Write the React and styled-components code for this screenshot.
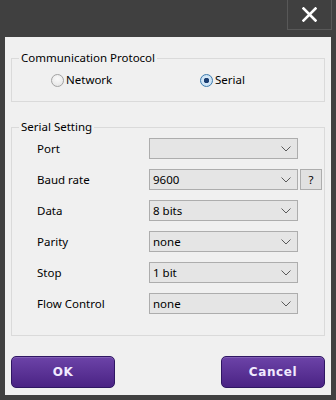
import styled, { createGlobalStyle } from "styled-components";

const GlobalStyle = createGlobalStyle`
  html, body {
    margin: 0;
    padding: 0;
    background: #404040;
  }
`;

const rows = [
  { label: "Port", value: "" },
  { label: "Baud rate", value: "9600", help: true },
  { label: "Data", value: "8 bits" },
  { label: "Parity", value: "none" },
  { label: "Stop", value: "1 bit" },
  { label: "Flow Control", value: "none" },
];

const Chevron = () => (
  <svg width="10" height="6" viewBox="0 0 10 6">
    <polyline points="0.5,0.5 5,5 9.5,0.5" fill="none" stroke="#5a5a5a" strokeWidth="1" />
  </svg>
);

const App = () => (
  <>
    <GlobalStyle />
    <Window>
      <TitleBar>
        <CloseButton>
          <svg width="15" height="15" viewBox="0 0 15 15">
            <path d="M1.5 1.5 L13.5 13.5 M13.5 1.5 L1.5 13.5" stroke="#fff" strokeWidth="2.6" strokeLinecap="square" />
          </svg>
        </CloseButton>
      </TitleBar>
      <Panel>
        <Group $top={14}>
          <Legend>Communication Protocol</Legend>
          <RadioRow>
            <RadioOption>
              <RadioMark />
              Network
            </RadioOption>
            <RadioOption>
              <RadioMark $checked />
              Serial
            </RadioOption>
          </RadioRow>
        </Group>
        <Group $top={18}>
          <Legend>Serial Setting</Legend>
          <SettingsGrid>
            {rows.map((row) => (
              <SettingRow key={row.label}>
                <FieldLabel>{row.label}</FieldLabel>
                <Select>
                  <span>{row.value}</span>
                  <Chevron />
                </Select>
                {row.help && <HelpButton>?</HelpButton>}
              </SettingRow>
            ))}
          </SettingsGrid>
        </Group>
        <ButtonBar>
          <PurpleButton>OK</PurpleButton>
          <PurpleButton>Cancel</PurpleButton>
        </ButtonBar>
      </Panel>
    </Window>
  </>
);

const Window = styled.div`
  width: 336px;
  height: 400px;
  box-sizing: border-box;
  background: #404040;
  padding: 0 5px 5px;
  display: flex;
  flex-direction: column;
  font-family: "Noto Sans", "Open Sans", sans-serif;
  font-size: 11.5px;
  color: #000;
`;

const TitleBar = styled.div`
  height: 37px;
  flex-shrink: 0;
  display: flex;
  justify-content: flex-end;
  align-items: flex-start;
`;

const CloseButton = styled.div`
  width: 45px;
  height: 30px;
  box-sizing: border-box;
  border: 1px solid #585858;
  border-top: none;
  display: flex;
  align-items: center;
  justify-content: center;
  margin-right: -1px;
`;

const Panel = styled.div`
  flex: 1;
  background: #f0f0f0;
  display: flex;
  flex-direction: column;
  padding: 0 6px 7px;
`;

const Group = styled.fieldset`
  margin: ${(p) => p.$top}px 0 0;
  padding: 0;
  border: 1px solid #dadada;
  min-width: 0;
`;

const Legend = styled.legend`
  margin-left: 7px;
  padding: 0 2px;
  line-height: 14px;
`;

const RadioRow = styled.div`
  display: grid;
  grid-template-columns: 149px auto;
  padding: 8px 0 14px 39px;
  line-height: 14px;
`;

const RadioOption = styled.label`
  display: flex;
  align-items: center;
  gap: 2px;
`;

const RadioMark = styled.span`
  width: 13px;
  height: 13px;
  box-sizing: border-box;
  border-radius: 50%;
  border: 1px solid ${(p) => (p.$checked ? "#3d7bad" : "#a2a2a2")};
  background: ${(p) =>
    p.$checked
      ? "radial-gradient(circle, #1c3f73 0 2.5px, #d7e9f8 3px, #b9d6ee 100%)"
      : "radial-gradient(circle at 50% 35%, #fafafa 0, #e2e2e2 100%)"};
`;

const SettingsGrid = styled.div`
  display: flex;
  flex-direction: column;
  gap: 10px;
  padding: 4px 0 21px 25px;
`;

const SettingRow = styled.div`
  display: flex;
  align-items: center;
  height: 21px;
`;

const FieldLabel = styled.span`
  width: 112px;
`;

const Select = styled.div`
  width: 149px;
  height: 21px;
  box-sizing: border-box;
  border: 1px solid #adadad;
  background: #e5e5e5;
  display: flex;
  align-items: center;
  justify-content: space-between;
  padding: 0 6px 0 3px;
`;

const HelpButton = styled.div`
  width: 22px;
  height: 21px;
  box-sizing: border-box;
  margin-left: 2px;
  border: 1px solid #adadad;
  background: #e1e1e1;
  display: flex;
  align-items: center;
  justify-content: center;
`;

const ButtonBar = styled.div`
  margin-top: auto;
  display: flex;
  justify-content: space-between;
`;

const PurpleButton = styled.button`
  width: 104px;
  height: 32px;
  border: 1px solid #2f1763;
  border-radius: 5px;
  background: linear-gradient(#6c43a8, #4a2384);
  box-shadow: inset 0 1px 0 rgba(255, 255, 255, 0.15);
  color: #f1eaff;
  font-family: "DejaVu Sans", sans-serif;
  font-weight: bold;
  font-size: 12px;
  letter-spacing: 0.6px;
  padding: 0;
`;

export default App;
